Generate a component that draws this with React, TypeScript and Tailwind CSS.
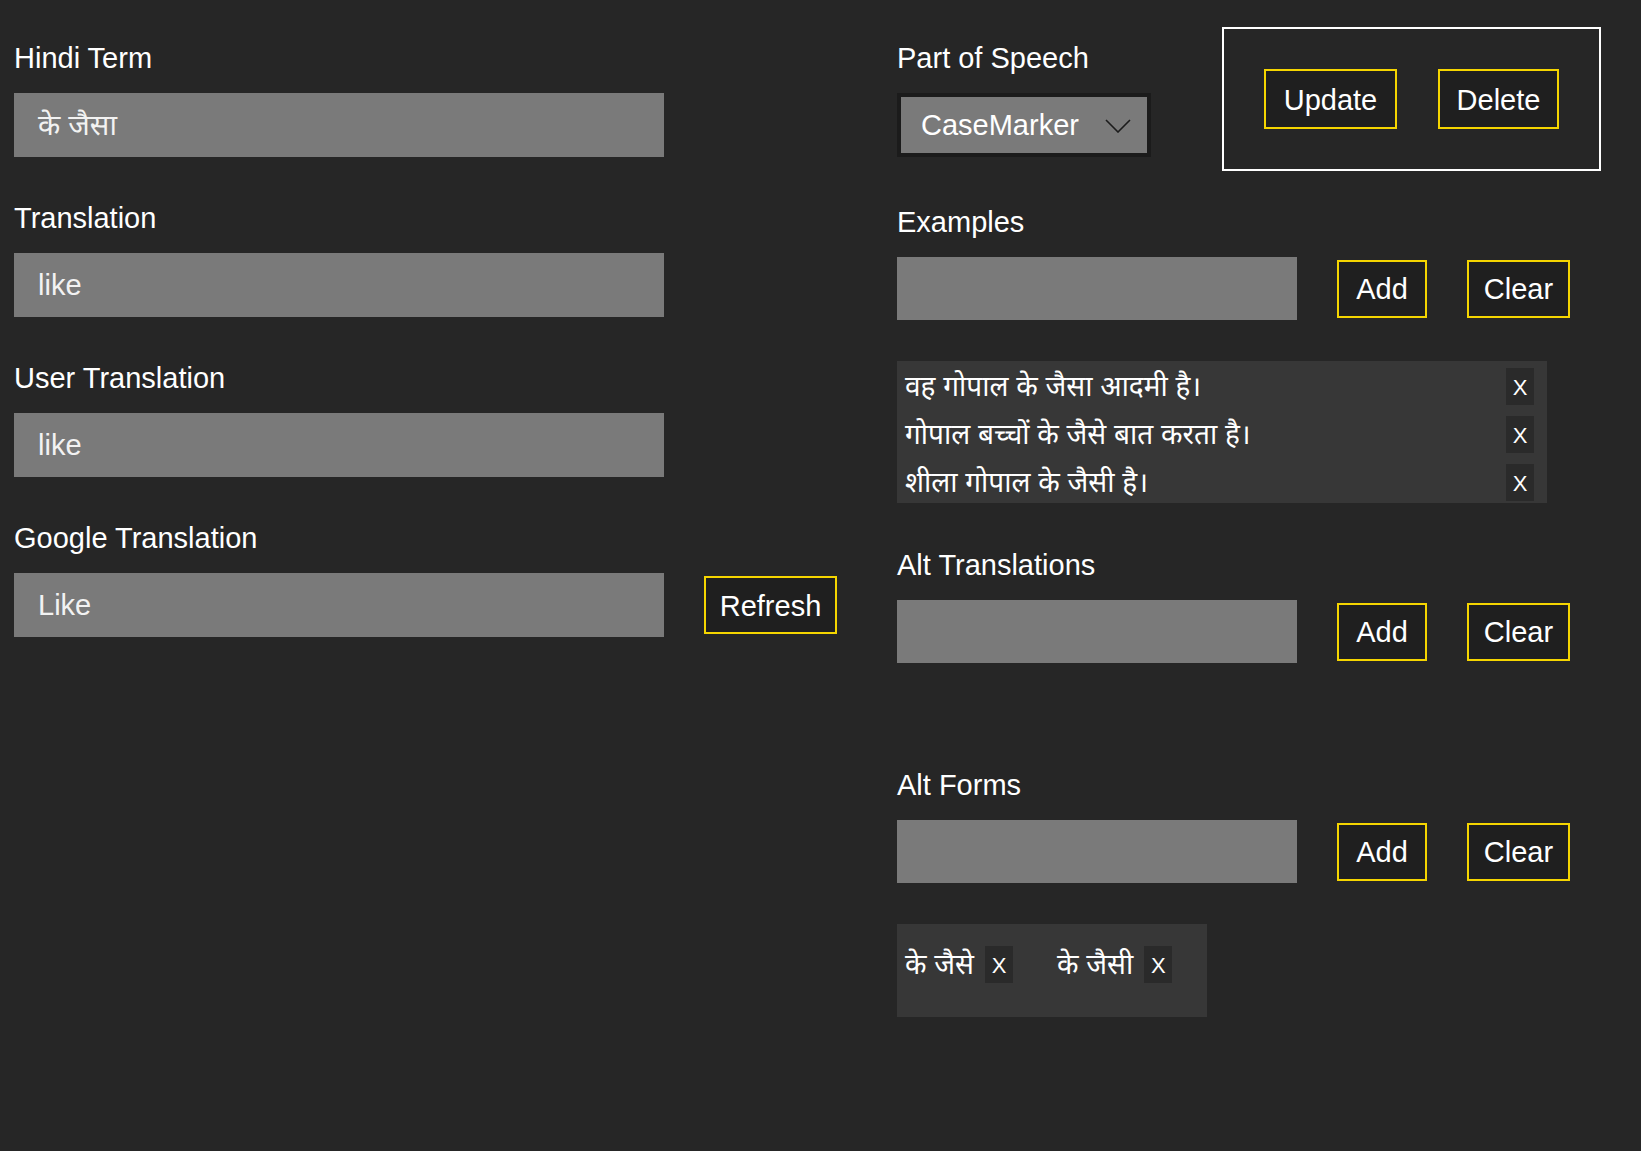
const font = {
  fontFamily:
    '"Liberation Sans", "Noto Sans Devanagari", "Lohit Devanagari", "FreeSans", sans-serif',
};

function Label({ children }: { children: React.ReactNode }) {
  return <div className="h-[40px] text-[29px] leading-[40px] text-white">{children}</div>;
}

function TextBox({ value, width }: { value?: string; width: string }) {
  return (
    <div className={`${width} h-[64px] bg-[#7a7a7a] pl-[24px] pt-[2px] flex items-center text-[29px] text-[#f2f2f2]`}>
      {value}
    </div>
  );
}

function YButton({ children, width }: { children: React.ReactNode; width: string }) {
  return (
    <button
      className={`${width} h-[58px] border-2 border-[#f5d500] bg-[#1f1f1f] pt-[3px] text-[29px] text-white flex items-center justify-center`}
    >
      {children}
    </button>
  );
}

function XBox() {
  return (
    <span className="w-[28px] h-[37px] bg-[#2a2a2a] pt-[2px] flex items-center justify-center text-[22px] font-light text-white">
      X
    </span>
  );
}

function AddRow() {
  return (
    <div className="flex items-center gap-[40px]">
      <div className="w-[400px] h-[63px] bg-[#7a7a7a]" />
      <YButton width="w-[90px]">Add</YButton>
      <YButton width="w-[103px]">Clear</YButton>
    </div>
  );
}

const examples = ["वह गोपाल के जैसा आदमी है।", "गोपाल बच्चों के जैसे बात करता है।", "शीला गोपाल के जैसी है।"];
const altForms = ["के जैसे", "के जैसी"];

export default function App() {
  return (
    <div className="w-[1641px] min-h-[1151px] bg-[#262626] flex text-white" style={font}>
      {/* left column */}
      <div className="w-[897px] pl-[14px] pt-[38px] flex flex-col">
        <Label>Hindi Term</Label>
        <div className="mt-[15px]">
          <TextBox width="w-[650px]" value="के जैसा" />
        </div>
        <div className="mt-[41px]">
          <Label>Translation</Label>
        </div>
        <div className="mt-[15px]">
          <TextBox width="w-[650px]" value="like" />
        </div>
        <div className="mt-[41px]">
          <Label>User Translation</Label>
        </div>
        <div className="mt-[15px]">
          <TextBox width="w-[650px]" value="like" />
        </div>
        <div className="mt-[41px]">
          <Label>Google Translation</Label>
        </div>
        <div className="mt-[15px] flex items-center gap-[40px]">
          <TextBox width="w-[650px]" value="Like" />
          <YButton width="w-[133px]">Refresh</YButton>
        </div>
      </div>

      {/* right column */}
      <div className="pt-[27px] flex flex-col">
        <div className="flex items-start">
          <div className="mt-[11px] flex flex-col">
            <Label>Part of Speech</Label>
            <div className="mt-[15px] w-[254px] h-[64px] bg-[#1b1b1b] p-[4px]">
              <div className="h-full bg-[#7a7a7a] pl-[20px] pr-[16px] pt-[2px] flex items-center justify-between text-[29px]">
                <span>CaseMarker</span>
                <svg width="26" height="14" viewBox="0 0 26 14" fill="none">
                  <path d="M1 1 L13 13 L25 1" stroke="#1c1c1c" strokeWidth="1.6" />
                </svg>
              </div>
            </div>
          </div>
          <div className="ml-[71px] border-2 border-white p-[40px] flex gap-[41px]">
            <button className="w-[133px] h-[60px] border-2 border-[#f5d500] bg-[#1f1f1f] pt-[4px] text-[29px] flex items-center justify-center">
              Update
            </button>
            <button className="w-[121px] h-[60px] border-2 border-[#f5d500] bg-[#1f1f1f] pt-[4px] text-[29px] flex items-center justify-center">
              Delete
            </button>
          </div>
        </div>

        <div className="mt-[31px]">
          <Label>Examples</Label>
        </div>
        <div className="mt-[15px]">
          <AddRow />
        </div>
        <div className="mt-[41px] w-[650px] bg-[#373737] pt-[7px] pb-[2px] pl-[8px] pr-[13px] flex flex-col gap-[11px]">
          {examples.map((e) => (
            <div key={e} className="h-[37px] flex items-center justify-between text-[28px]">
              <span>{e}</span>
              <XBox />
            </div>
          ))}
        </div>

        <div className="mt-[42px]">
          <Label>Alt Translations</Label>
        </div>
        <div className="mt-[15px]">
          <AddRow />
        </div>
        <div className="mt-[41px] h-[19px]" />

        <div className="mt-[42px]">
          <Label>Alt Forms</Label>
        </div>
        <div className="mt-[15px]">
          <AddRow />
        </div>
        <div className="mt-[41px] w-[310px] h-[93px] bg-[#373737] pl-[8px] pt-[22px] flex items-start gap-[44px]">
          {altForms.map((f) => (
            <div key={f} className="flex items-start gap-[11px]">
              <span className="text-[28px] leading-[37px]">{f}</span>
              <XBox />
            </div>
          ))}
        </div>
      </div>
    </div>
  );
}
